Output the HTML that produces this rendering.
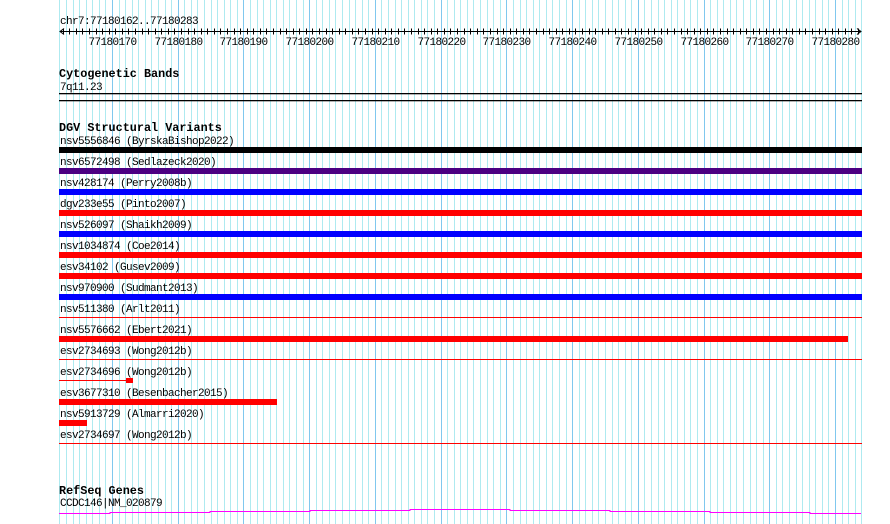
<!DOCTYPE html>
<html><head><meta charset="utf-8"><style>
html,body{margin:0;padding:0;background:#fff;width:890px;height:524px;overflow:hidden}
svg{display:block}
text{font-family:"Liberation Mono",monospace;font-size:11px;letter-spacing:-0.6px;fill:#000}
.b{font-weight:bold;font-size:11.8px;letter-spacing:0}
</style></head><body>
<svg id="s" width="890" height="524" xmlns="http://www.w3.org/2000/svg">
<g id="grid"></g>
<text x="60" y="24">chr7:77180162..77180283</text>
<line x1="60" y1="31.5" x2="861" y2="31.5" stroke="#000"/>
<path d="M64 28.5 L60 31.5 L64 34.5 M857 28.5 L861 31.5 L857 34.5" stroke="#000" fill="none"/>
<g id="ticks"></g>
<g id="labels"></g>
<text class="b" x="59" y="77">Cytogenetic Bands</text>
<text x="60" y="90">7q11.23</text>
<rect x="59" y="93" width="803" height="1.3" fill="#000"/>
<rect x="59" y="100" width="803" height="1.3" fill="#000"/>
<text class="b" x="59" y="131">DGV Structural Variants</text>
<text x="60" y="144">nsv5556846 (ByrskaBishop2022)</text>
<rect x="59" y="147" width="803" height="6" fill="#000"/>
<text x="60" y="165">nsv6572498 (Sedlazeck2020)</text>
<rect x="59" y="168" width="803" height="6" fill="#4b0082"/>
<text x="60" y="186">nsv428174 (Perry2008b)</text>
<rect x="59" y="189" width="803" height="6" fill="#0000ff"/>
<text x="60" y="207">dgv233e55 (Pinto2007)</text>
<rect x="59" y="210" width="803" height="6" fill="#ff0000"/>
<text x="60" y="228">nsv526097 (Shaikh2009)</text>
<rect x="59" y="231" width="803" height="6" fill="#0000ff"/>
<text x="60" y="249">nsv1034874 (Coe2014)</text>
<rect x="59" y="252" width="803" height="6" fill="#ff0000"/>
<text x="60" y="270">esv34102 (Gusev2009)</text>
<rect x="59" y="273" width="803" height="6" fill="#ff0000"/>
<text x="60" y="291">nsv970900 (Sudmant2013)</text>
<rect x="59" y="294" width="803" height="6" fill="#0000ff"/>
<text x="60" y="312">nsv511380 (Arlt2011)</text>
<rect x="59" y="317" width="803" height="1" fill="#ff0000"/>
<text x="60" y="333">nsv5576662 (Ebert2021)</text>
<rect x="59" y="336" width="789" height="6" fill="#ff0000"/>
<text x="60" y="354">esv2734693 (Wong2012b)</text>
<rect x="59" y="359" width="803" height="1" fill="#ff0000"/>
<text x="60" y="375">esv2734696 (Wong2012b)</text>
<rect x="59" y="380" width="67" height="1" fill="#ff0000"/>
<rect x="126" y="378" width="7" height="5" fill="#ff0000"/>
<text x="60" y="396">esv3677310 (Besenbacher2015)</text>
<rect x="59" y="399" width="218" height="6" fill="#ff0000"/>
<text x="60" y="417">nsv5913729 (Almarri2020)</text>
<rect x="59" y="420" width="28" height="6" fill="#ff0000"/>
<text x="60" y="438">esv2734697 (Wong2012b)</text>
<rect x="59" y="443" width="803" height="1" fill="#ff0000"/>
<text class="b" x="59" y="494">RefSeq Genes</text>
<text x="60" y="506">CCDC146|NM_020879</text>
<path d="M59 513.5H110V512.5H210V511.5H310V510.5H410V509.5H510V510.5H610V511.5H710V512.5H810V513.5H861" stroke="#ff00ff" fill="none"/>
</svg>
<script>
var NS="http://www.w3.org/2000/svg";
var g=document.getElementById('grid'),t=document.getElementById('ticks'),l=document.getElementById('labels');
function el(p,n,a){var e=document.createElementNS(NS,n);for(var k in a)e.setAttribute(k,a[k]);p.appendChild(e);return e;}
for(var k=0;k<=122;k++){
 var x=Math.round(59.4+k*6.573)+0.5;
 var major=((k-8)%10===0);
 el(g,'line',{x1:x,y1:0,x2:x,y2:524,stroke:major?'#80c8ee':'#aeeaf0','stroke-width':1});
 if(k<122){var tx=Math.round(59.4+(k+0.5)*6.573)+0.5;el(t,'line',{x1:tx,y1:28.5,x2:tx,y2:34.5,stroke:'#000'});}
 if(major){var tt=el(l,'text',{x:x,y:45,'text-anchor':'middle'});tt.textContent=String(77180162+k);}
}
</script>
</body></html>
